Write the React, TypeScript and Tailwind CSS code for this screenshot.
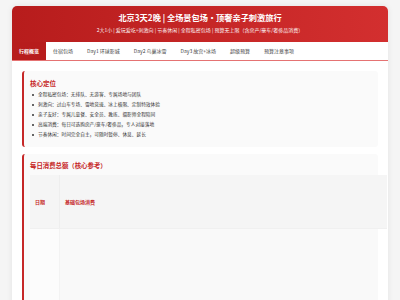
import React from "react";

const tabs = ["行程概览", "住宿包场", "Day1 环球影城", "Day2 鸟巢冰雪", "Day3 故宫+冰场", "超级预算", "预算注意事项"];
const bullets = [
  "全程私密包场：无排队、无游客、专属场地与团队",
  "刺激向：过山车专场、雪地竞速、冰上极限、定制特效体验",
  "亲子友好：专属儿童餐、安全员、教练、摄影师全程陪同",
  "高端消费：每日可选购房产/豪车/奢侈品，专人对接落地",
  "节奏休闲：时间完全自主，可随时暂停、休息、延长",
];

export default function App() {
  return (
    <div
      className="w-[400px] h-[300px] overflow-hidden bg-[#f5f5f5] pt-[6px]"
      style={{ fontFamily: '"Noto Sans CJK SC", "Noto Sans", sans-serif' }}
    >
      <div className="mx-[12px] w-[376px] h-[320px] bg-white rounded-[5px] overflow-hidden shadow-[0_0_6px_rgba(0,0,0,0.08)]">
        <div className="h-[36px] bg-gradient-to-r from-[#b71c1c] to-[#d32f2f] flex flex-col items-center text-white">
          <div className="mt-[6px] text-[8.2px] leading-[10px] font-bold">北京3天2晚 | 全场景包场・顶奢亲子刺激旅行</div>
          <div className="mt-[5px] text-[5px] leading-[6px] opacity-95">2大1小 | 爱玩爱吃+刺激向 | 节奏休闲 | 全程私密包场 | 预算无上限（含房产/豪车/奢侈品消费）</div>
        </div>
        <div className="h-[19px] flex border-b border-[#e57373] bg-white">
          {tabs.map((t, i) => (
            <div
              key={t}
              className={
                i === 0
                  ? "px-[7px] flex items-center text-[5px] font-bold text-white bg-[#b71c1c]"
                  : "px-[7px] flex items-center text-[5px] text-[#444]"
              }
            >
              {t}
            </div>
          ))}
        </div>
        <div className="px-[10px] pt-[10px]">
          <div className="w-[356px] bg-[#fafafa] border-l-2 border-[#c62828] rounded-[3px] pl-[6px] pt-[7px] pb-[7px]">
            <div className="text-[6.5px] leading-[10px] font-bold text-[#c62828]">核心定位</div>
            <div className="mt-[2px] flex flex-col">
              {bullets.map((b) => (
                <div key={b} className="h-[10px] flex items-center text-[4.7px] text-[#333]">
                  <span className="w-[2px] h-[2px] rounded-full bg-[#333] ml-[2px] mr-[4px]" />
                  {b}
                </div>
              ))}
            </div>
          </div>
          <div className="mt-[7px] w-[356px] bg-[#fafafa] border-l-2 border-[#c62828] rounded-[3px] pl-[6px] pt-[7px] h-[200px]">
            <div className="text-[6.4px] leading-[10px] font-bold text-[#c62828]">每日消费总额（核心参考）</div>
            <div className="mt-[4px] w-[357px] h-[54px] flex bg-[#f5f5f5] border-b border-[#f0f0f0]">
              <div className="w-[30px] border-r border-[#eeeeee] flex items-center pl-[5px] text-[5px] font-bold text-[#c62828]">日期</div>
              <div className="flex-1 flex items-center pl-[5px] text-[5px] font-bold text-[#c62828]">基础包场消费</div>
            </div>
            <div className="w-[348px] h-[80px] flex">
              <div className="w-[30px] bg-[#fcfcfc] border-r border-[#f3f3f3]" />
              <div className="flex-1 bg-[#f9f9f9]" />
            </div>
          </div>
        </div>
      </div>
    </div>
  );
}
